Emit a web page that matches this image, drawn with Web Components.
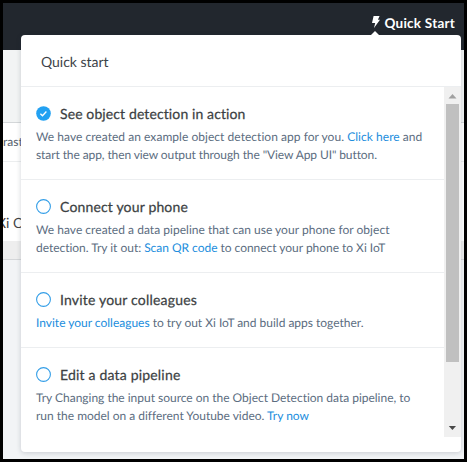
<!DOCTYPE html>
<html lang="en"><head><meta charset="utf-8"><title>Quick start</title>
<style>
html,body{margin:0;height:100%;overflow:hidden}
body{font-family:Lato,"Open Sans",sans-serif;font-size:12px;color:#5c6d7f;text-rendering:geometricPrecision}
</style></head><body>
<app-window>
  <nav-bar slot="nav">Quick Start</nav-bar>
  <page-backdrop></page-backdrop>
  <quick-panel slot="panel">
    <fit-text slot="title" w="67">Quick start</fit-text>
    <task-item done>
      <fit-text slot="title" w="185.5">See object detection in action</fit-text>
      <fit-text w="386">We have created an example object detection app for you. <text-link>Click here</text-link> and</fit-text>
      <fit-text w="340">start the app, then view output through the "View App UI" button.</fit-text>
    </task-item>
    <task-item>
      <fit-text slot="title" w="127.5">Connect your phone</fit-text>
      <fit-text w="353">We have created a data pipeline that can use your phone for object</fit-text>
      <fit-text w="349">detection. Try it out: <text-link>Scan QR code</text-link> to connect your phone to Xi IoT</fit-text>
    </task-item>
    <task-item>
      <fit-text slot="title" w="136.5">Invite your colleagues</fit-text>
      <fit-text w="327"><text-link>Invite your colleagues</text-link> to try out Xi IoT and build apps together.</fit-text>
    </task-item>
    <task-item last>
      <fit-text slot="title" w="120">Edit a data pipeline</fit-text>
      <fit-text w="374">Try Changing the input source on the Object Detection data pipeline, to</fit-text>
      <fit-text w="272">run the model on a different Youtube video. <text-link>Try now</text-link></fit-text>
    </task-item>
  </quick-panel>
</app-window>
<script>
const define=(name,html,ready)=>customElements.define(name,class extends HTMLElement{
  constructor(){super();this.attachShadow({mode:'open'}).innerHTML=html}
  connectedCallback(){if(ready)ready(this)}
});
define('app-window',`<style>
:host{display:flex;flex-direction:column;box-sizing:border-box;width:467px;height:462px;border:3px solid #000;position:relative;overflow:hidden;background:#f2f4f6}
.panel{position:absolute;left:18px;top:32px}
</style><slot name="nav"></slot><slot></slot><div class="panel"><slot name="panel"></slot></div>`);
define('nav-bar',`<style>
:host{display:flex;flex:none;height:47px;box-sizing:border-box;background:#22272e;color:#fff;justify-content:flex-end;padding:10px 9px 0 0}
.b{display:flex;align-items:center;gap:5px;height:19px;font-size:13.5px;font-weight:700}
svg{display:block;margin-top:-1px}
</style><div class="b"><svg width="8" height="12" viewBox="0 0 8 12"><path d="M1.6 0H7.6L5.9 3.8H8L2 12L3.2 7H0Z" fill="#fff"/></svg><fit-text w="70"><slot></slot></fit-text></div>`);
define('page-backdrop',`<style>
:host{display:flex;flex-direction:column;flex:1;color:#56616d}
div{box-sizing:border-box;flex:none;white-space:nowrap;overflow:hidden}
.a{height:73px;background:#f2f4f4;border-bottom:1px solid #d4d7d9}
.b{height:39px;background:#fff;border-bottom:1px solid #eceeef;line-height:38px}
.c{height:79px;background:#fff}
.c span{display:block;margin-left:-6px;font-size:14px;color:#444;line-height:20px;padding-top:51px}
.d{height:19px;background:#eee;border-bottom:1px solid #d5d7d9}
</style><div class="a"></div><div class="b">rast</div><div class="c"><span>Xi C</span></div><div class="d"></div>`);
define('fit-text',`<style>:host{display:block;white-space:nowrap;width:max-content}</style><slot></slot>`,el=>{
  // Distribute the remaining width between the letters of the line.
  const fit=()=>{
    let t=el.textContent;
    const s=el.querySelector('slot');
    if(s)t=s.assignedNodes().map(n=>n.textContent).join('');
    const natural=el.getBoundingClientRect().width;
    if(natural)el.style.letterSpacing=(el.getAttribute('w')-natural+.5)/t.trim().length+'px';
  };
  el.fit=fit;
});
define('text-link',`<style>:host{color:#218ddd}</style><slot></slot>`);
define('check-mark',`<style>:host{display:block;width:15px;height:15px}svg{display:block}.on{display:none}:host([done]) .on{display:block}:host([done]) .off{display:none}</style>
<svg class="on" width="15" height="15" viewBox="0 0 15 15"><circle cx="7.5" cy="7.5" r="7.3" fill="#22a1f2"/><path d="M4.4 7.8L6.5 9.8L10.4 5.5" fill="none" stroke="#fff" stroke-width="1.3"/></svg>
<svg class="off" width="15" height="15" viewBox="0 0 15 15"><circle cx="7.5" cy="7.5" r="6.9" fill="#fff" stroke="#339ee7" stroke-width="1.1"/></svg>`);
define('task-item',`<style>
:host{display:block;padding:16px 0 15px 15px;border-bottom:1px solid #eceef0}
:host([last]){border:0}
.h{display:flex;align-items:center;gap:9px;height:21px;color:#3c3f43;font-size:14px;-webkit-text-stroke:.25px #3c3f43}
.p{padding-top:4px;line-height:18px;font-size:12px}
</style><div class="h"><check-mark></check-mark><slot name="title"></slot></div><div class="p"><slot></slot></div>`,el=>{
  el.shadowRoot.querySelector('check-mark').toggleAttribute('done',el.hasAttribute('done'));
});
define('scroll-rail',`<style>
:host{display:flex;flex-direction:column;width:17px;height:350px;background:#f0f0f0;flex:none}
svg{display:block;flex:none}.t{width:13px;height:258px;margin-left:2px;background:#c0c0c0}
.s{flex:1}
</style><svg width="17" height="17"><path d="M4.5 11.5H12.5L8.5 7Z" fill="#a0a0a0"/></svg><div class="t"></div><div class="s"></div><svg width="17" height="17"><path d="M4.8 6H12L8.4 10Z" fill="#484848"/></svg>`);
define('quick-panel',`<style>
:host{display:block;width:440px;height:417px;background:#fff;border-radius:4px;box-shadow:0 1px 5px rgba(30,40,60,.2);position:relative}
.tip{position:absolute;left:349px;top:-4px}
header{height:52px;box-sizing:border-box;border-bottom:1px solid #eceef0;padding:0 20px;display:flex;align-items:center;font-size:14px;color:#3c4248;padding-top:2px}
.m{display:flex;height:350px}.l{flex:1;min-width:0;overflow:hidden}
</style><svg class="tip" width="10" height="5"><path d="M0 5L5 0L10 5Z" fill="#fff"/></svg>
<header><slot name="title"></slot></header><div class="m"><div class="l"><slot></slot></div><scroll-rail></scroll-rail></div>`);
const fitAll=root=>{for(const e of root.querySelectorAll('*')){if(e.fit)e.fit();if(e.shadowRoot)fitAll(e.shadowRoot)}};
fitAll(document);
</script></body></html>
